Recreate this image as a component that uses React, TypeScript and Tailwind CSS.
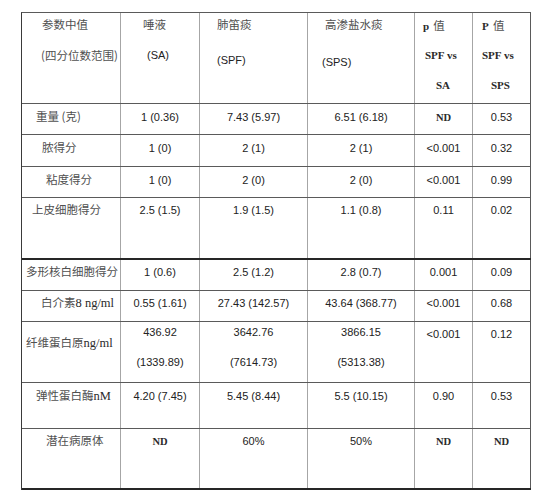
import React from "react";

const cjk = "font-['Noto_Sans_CJK_SC',sans-serif] text-[11.5px] text-[#505050]";
const num = "font-['Liberation_Sans',sans-serif] text-[11px] text-[#222]";
const serif = "font-['Liberation_Serif',serif] text-[11px] font-bold text-[#2a2a2a]";
const unit = "font-['Liberation_Serif',serif] text-[12.5px] text-[#2a2a2a]";
const nd = "font-['Liberation_Serif',serif] text-[10.5px] font-bold text-[#2a2a2a]";

type CellProps = { w: string; last?: boolean; center?: boolean; className?: string; children?: React.ReactNode };

function Cell({ w, last, center, className, children }: CellProps) {
  return (
    <div
      className={
        w +
        " shrink-0 border-r leading-[18px] whitespace-nowrap " +
        (last ? "border-[#5a5a5a] " : "border-[#a6a6a6] ") +
        (center ? "text-center " : "") +
        (className || "")
      }
    >
      {children}
    </div>
  );
}

const C1 = "w-[99px]";
const C2 = "w-[79px]";
const C3 = "w-[108px]";
const C4 = "w-[107px]";
const C5 = "w-[58px]";
const C6 = "w-[58px]";

function ValueRow({
  h,
  border,
  label,
  labelPad,
  values,
  pt,
}: {
  h: string;
  border: string;
  label: React.ReactNode;
  labelPad: string;
  values: React.ReactNode[];
  pt: string;
}) {
  return (
    <div className={"flex " + h + " " + border}>
      <Cell w={C1} className={pt + " " + labelPad}>{label}</Cell>
      <Cell w={C2} center className={pt}>{values[0]}</Cell>
      <Cell w={C3} center className={pt}>{values[1]}</Cell>
      <Cell w={C4} center className={pt}>{values[2]}</Cell>
      <Cell w={C5} center className={pt}>{values[3]}</Cell>
      <Cell w={C6} last center className={pt}>{values[4]}</Cell>
    </div>
  );
}

const N = ({ children }: { children: React.ReactNode }) => <span className={num}>{children}</span>;
const S = ({ children }: { children: React.ReactNode }) => <span className={serif}>{children}</span>;
const U = ({ children }: { children: React.ReactNode }) => <span className={unit}>{children}</span>;
const D = () => <span className={nd}>ND</span>;
const K = ({ children }: { children: React.ReactNode }) => <span className={cjk}>{children}</span>;

export default function App() {
  const hb = "border-b border-[#5a5a5a]";
  const hbDark = "border-b-2 border-[#262626]";
  return (
    <div className="w-[541px] h-[504px] bg-white pt-[12px] pl-[21px]">
      <div className="w-[510px] border-l border-t border-l-[#3a3a3a] border-t-[#5a5a5a]">
        {/* Header */}
        <div className={"flex h-[91px] " + hb}>
          <Cell w={C1} className="pt-[2px]">
            <div className={"pl-[20px] " + cjk}>参数中值</div>
            <div className={"pl-[19px] mt-[13px] " + cjk}>(四分位数范围)</div>
          </Cell>
          <Cell w={C2} className="pt-[2px]">
            <div className={"pl-[22px] " + cjk}>唾液</div>
            <div className={"pl-[26px] mt-[13px] " + num}>(SA)</div>
          </Cell>
          <Cell w={C3} className="pt-[2px]">
            <div className={"pl-[17px] " + cjk}>肺笛痰</div>
            <div className={"pl-[17px] mt-[18px] " + num}>(SPF)</div>
          </Cell>
          <Cell w={C4} className="pt-[2px]">
            <div className={"pl-[17px] " + cjk}>高渗盐水痰</div>
            <div className={"pl-[14px] mt-[20px] " + num}>(SPS)</div>
          </Cell>
          <Cell w={C5} className="pt-[2px]">
            <div className="pl-[8px]">
              <S>p</S> <K>值</K>
            </div>
            <div className={"pl-[10px] mt-[11px] " + serif}>SPF vs</div>
            <div className={"pl-[21px] mt-[12px] " + serif}>SA</div>
          </Cell>
          <Cell w={C6} last className="pt-[2px]">
            <div className="pl-[9px]">
              <S>P</S> <K>值</K>
            </div>
            <div className={"pl-[9px] mt-[11px] " + serif}>SPF vs</div>
            <div className={"pl-[18px] mt-[12px] " + serif}>SPS</div>
          </Cell>
        </div>

        <ValueRow
          h="h-[31px]"
          border={hb}
          pt="pt-[2px]"
          labelPad="pl-[14px]"
          label={<K>重量 (克)</K>}
          values={[<N>1 (0.36)</N>, <N>7.43 (5.97)</N>, <N>6.51 (6.18)</N>, <D />, <N>0.53</N>]}
        />
        <ValueRow
          h="h-[32px]"
          border={hb}
          pt="pt-[2px]"
          labelPad="pl-[20px]"
          label={<K>脓得分</K>}
          values={[<N>1 (0)</N>, <N>2 (1)</N>, <N>2 (1)</N>, <N>&lt;0.001</N>, <N>0.32</N>]}
        />
        <ValueRow
          h="h-[31px]"
          border={hb}
          pt="pt-[2px]"
          labelPad="pl-[24px]"
          label={<K>粘度得分</K>}
          values={[<N>1 (0)</N>, <N>2 (0)</N>, <N>2 (0)</N>, <N>&lt;0.001</N>, <N>0.99</N>]}
        />
        <ValueRow
          h="h-[62px]"
          border={hbDark}
          pt="pt-[1px]"
          labelPad="pl-[10px]"
          label={<K>上皮细胞得分</K>}
          values={[<N>2.5 (1.5)</N>, <N>1.9 (1.5)</N>, <N>1.1 (0.8)</N>, <N>0.11</N>, <N>0.02</N>]}
        />
        <ValueRow
          h="h-[31px]"
          border={hb}
          pt="pt-[1px]"
          labelPad="pl-[4px]"
          label={<K>多形核白细胞得分</K>}
          values={[<N>1 (0.6)</N>, <N>2.5 (1.2)</N>, <N>2.8 (0.7)</N>, <N>0.001</N>, <N>0.09</N>]}
        />
        <ValueRow
          h="h-[31px]"
          border={hb}
          pt="pt-[1px]"
          labelPad="pl-[19px]"
          label={
            <>
              <K>白介素</K>
              <U>8 ng/ml</U>
            </>
          }
          values={[<N>0.55 (1.61)</N>, <N>27.43 (142.57)</N>, <N>43.64 (368.77)</N>, <N>&lt;0.001</N>, <N>0.68</N>]}
        />

        {/* Fibrinogen row */}
        <div className={"flex h-[61px] " + hb}>
          <Cell w={C1} className="pt-[10px] pl-[4px]">
            <K>纤维蛋白原</K>
            <U>ng/ml</U>
          </Cell>
          <Cell w={C2} center className="pt-[1px]">
            <div className={num}>436.92</div>
            <div className={"mt-[12px] " + num}>(1339.89)</div>
          </Cell>
          <Cell w={C3} center className="pt-[1px]">
            <div className={num}>3642.76</div>
            <div className={"mt-[12px] " + num}>(7614.73)</div>
          </Cell>
          <Cell w={C4} center className="pt-[1px]">
            <div className={num}>3866.15</div>
            <div className={"mt-[12px] " + num}>(5313.38)</div>
          </Cell>
          <Cell w={C5} center className="pt-[1px]">
            <N>&lt;0.001</N>
          </Cell>
          <Cell w={C6} last center className="pt-[1px]">
            <N>0.12</N>
          </Cell>
        </div>

        <ValueRow
          h="h-[46px]"
          border={hb}
          pt="pt-[2px]"
          labelPad="pl-[14px]"
          label={
            <>
              <K>弹性蛋白酶</K>
              <U>nM</U>
            </>
          }
          values={[<N>4.20 (7.45)</N>, <N>5.45 (8.44)</N>, <N>5.5 (10.15)</N>, <N>0.90</N>, <N>0.53</N>]}
        />
        <ValueRow
          h="h-[61px]"
          border={hbDark}
          pt="pt-[1px]"
          labelPad="pl-[24px]"
          label={<K>潜在病原体</K>}
          values={[<D />, <N>60%</N>, <N>50%</N>, <D />, <D />]}
        />
      </div>
    </div>
  );
}
